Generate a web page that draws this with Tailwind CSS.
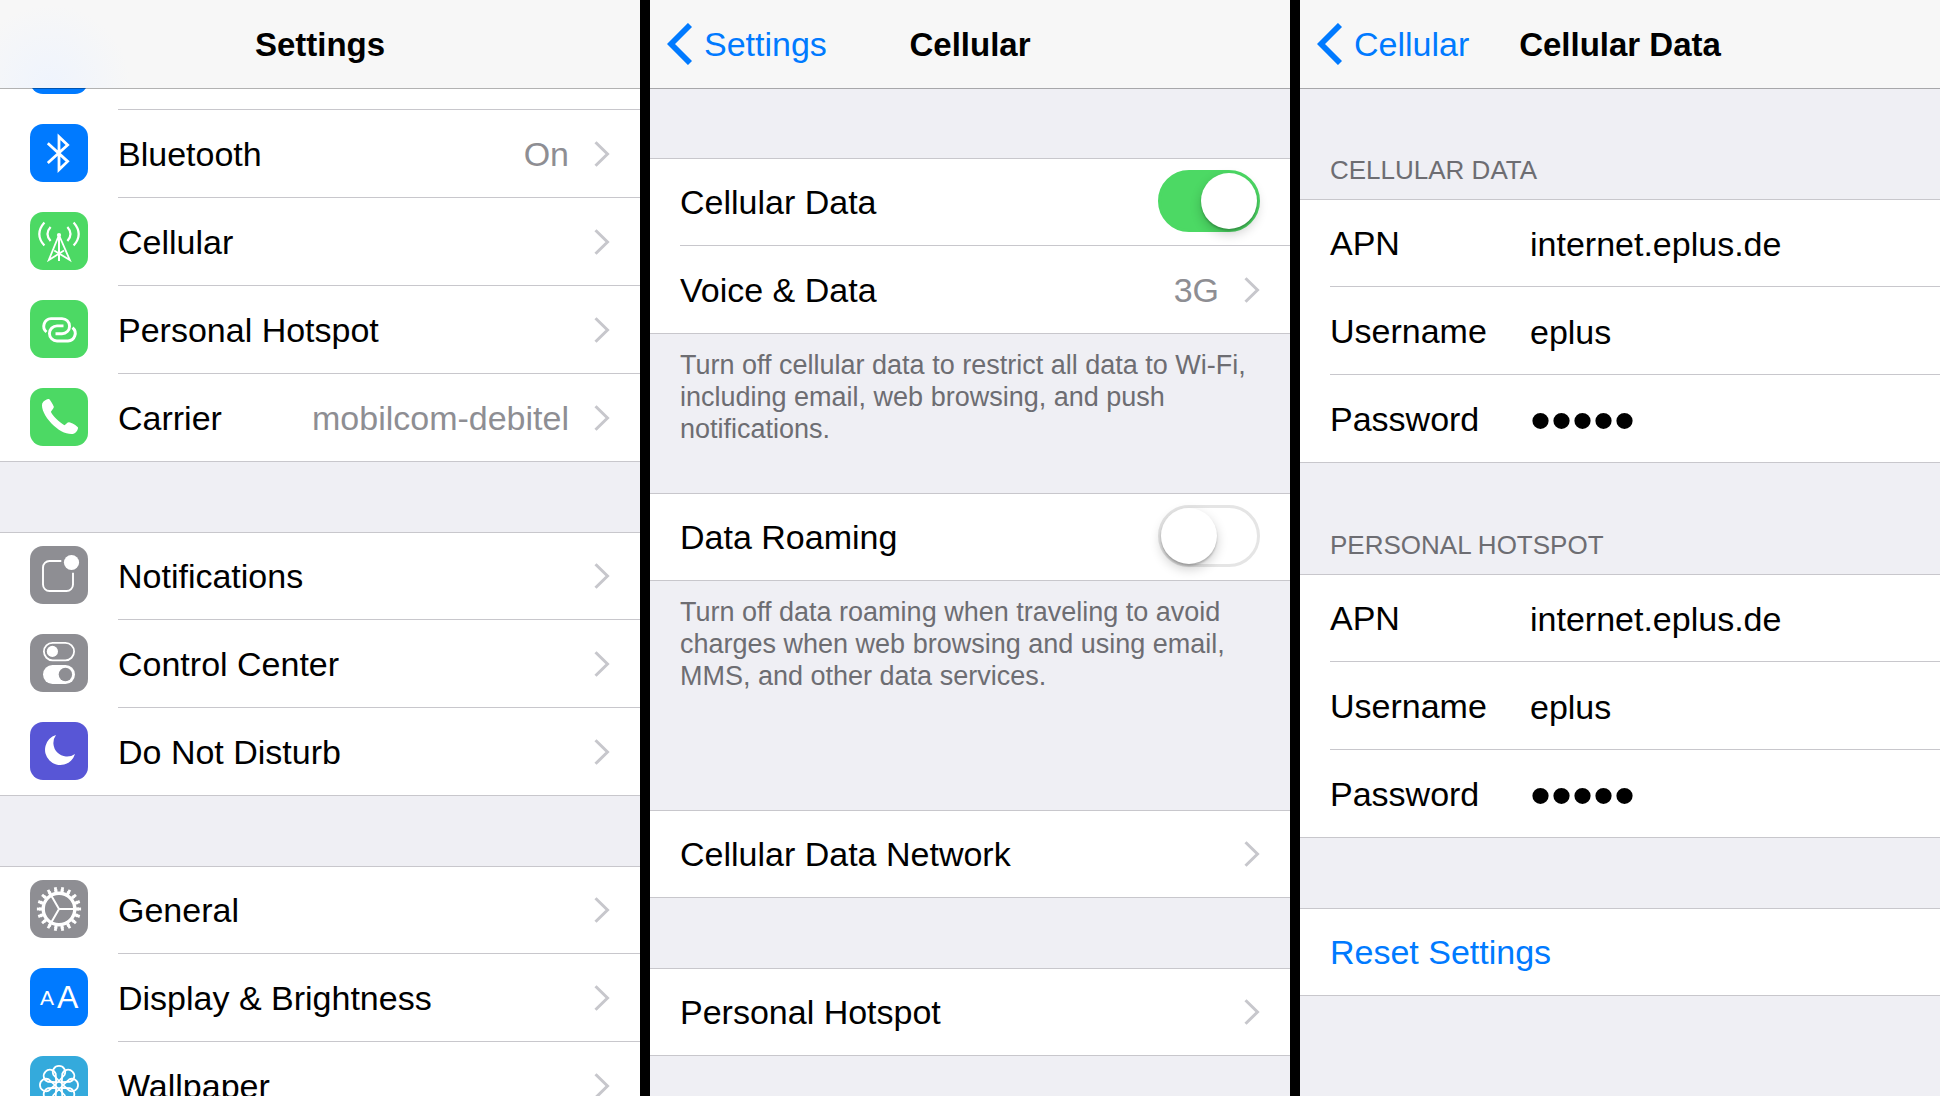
<!DOCTYPE html>
<html lang="en">

<head>
  <meta charset="UTF-8">
  <meta name="viewport" content="width=device-width, initial-scale=1.0">
  <title>Settings</title>
  <script src="https://cdn.jsdelivr.net/npm/@tailwindcss/browser@4"></script>
</head>

<body class="bg-black font-['Liberation_Sans',Arial,sans-serif] text-[34px] leading-10 text-black">

  <!-- shared arrows -->
  <svg class="hidden">
    <symbol id="chevron" viewBox="0 0 16 26">
      <path d="M1.5 1.2 13.5 13 1.5 24.8" fill="none" stroke="#c7c7cc" stroke-width="3" />
    </symbol>
    <symbol id="back" viewBox="0 0 25 42">
      <path d="M23 2 4 21 23 40" fill="none" stroke="#007aff" stroke-width="5.8" />
    </symbol>
  </svg>

  <div class="grid h-screen grid-cols-3 gap-2.5 overflow-hidden">

    <!-- Settings -->
    <section class="min-w-0 overflow-hidden bg-[#efeff4]">
      <header class="relative z-10 flex h-[89px] items-center justify-center border-b border-black/30 bg-[#f7f7f7] bg-[radial-gradient(circle_at_50px_85px,#eff4fd,#f7f7f7_80px)] bg-clip-padding">
        <h1 class="pt-0.5 text-[33px] font-bold">Settings</h1>
      </header>

      <ul class="-mt-[67px]">
        <li class="flex h-22 items-center border-[#c8c7cc] bg-white pl-[30px]">
          <span class="mr-[30px] mb-0.5 size-[58px] shrink-0 rounded-[13px] bg-[#007aff]"></span>
          <span class="h-full flex-1 border-b border-[#c8c7cc]"></span>
        </li>
        <li class="h-22 bg-white">
          <a href="#" class="flex h-full items-center pl-[30px]">
            <svg class="mr-[30px] mb-0.5 size-[58px] shrink-0 rounded-[13px] bg-[#007aff]" viewBox="0 0 58 58" fill="none" stroke="#fff" stroke-width="2.8">
              <path d="M17.8 19.3 37.6 37.4 29 45.7V12.7L37.6 21 17.8 39" />
            </svg>
            <span class="flex h-full flex-1 items-center border-b border-[#c8c7cc] pr-[30px]">
              <span class="flex-1">Bluetooth</span>
              <span class="text-[#8e8e93]">On</span>
              <svg class="ml-[25px] h-[26px] w-4"><use href="#chevron" /></svg>
            </span>
          </a>
        </li>
        <li class="h-22 bg-white">
          <a href="#" class="flex h-full items-center pl-[30px]">
            <svg class="mr-[30px] mb-0.5 size-[58px] shrink-0 rounded-[13px] bg-[#4cd964]" viewBox="0 0 58 58" fill="none" stroke="#fff" stroke-width="2.2">
              <path d="M14.4 10.4Q4.2 22 14.4 33.6M43.6 10.4Q53.8 22 43.6 33.6M20.6 15Q14.4 22 20.6 29M37.4 15Q43.6 22 37.4 29" />
              <path d="M28.6 24 18.8 48 34 38.6M29.4 24 39.8 48 24.2 38.6" stroke-width="1.8" />
              <path d="M29 24V49" stroke-width="2" />
              <circle cx="29" cy="23" r="2.1" fill="#fff" stroke="none" />
            </svg>
            <span class="flex h-full flex-1 items-center border-b border-[#c8c7cc] pr-[30px]">
              <span class="flex-1">Cellular</span>
              <svg class="ml-[25px] h-[26px] w-4"><use href="#chevron" /></svg>
            </span>
          </a>
        </li>
        <li class="h-22 bg-white">
          <a href="#" class="flex h-full items-center pl-[30px]">
            <svg class="mr-[30px] mb-0.5 size-[58px] shrink-0 rounded-[13px] bg-[#4cd964]" viewBox="0 0 58 58" fill="none" stroke="#fff" stroke-width="2.9">
              <path d="M16.5 32A7.6 7.6 0 0 1 21 18.6H32A7.55 7.55 0 0 1 32 33.7H25.5" />
              <path d="M42.5 27.6A7.6 7.6 0 0 1 38 41H27A7.55 7.55 0 0 1 27 25.9H33.5" />
            </svg>
            <span class="flex h-full flex-1 items-center border-b border-[#c8c7cc] pr-[30px]">
              <span class="flex-1">Personal Hotspot</span>
              <svg class="ml-[25px] h-[26px] w-4"><use href="#chevron" /></svg>
            </span>
          </a>
        </li>
        <li class="h-22 border-b border-[#c8c7cc] bg-white">
          <a href="#" class="flex h-full items-center pl-[30px]">
            <svg class="mr-[30px] mb-0.5 size-[58px] shrink-0 rounded-[13px] bg-[#4cd964]" viewBox="0 0 58 58" fill="#fff">
              <path d="M12.2 15.5C13.5 12.5 17.5 10.8 18.8 11C20.2 11.4 22.6 16 23.8 18.5C24.3 20 21.8 22 20.9 23.8C21.5 26.5 30 35.2 34.4 37.2C35.8 36.5 37.3 34.2 39 34.2C41.5 34.5 46.8 37.5 48 39.5C48.4 41.5 45.5 45.8 42.5 46C36 46.5 28 42.3 21.5 35.5C15 28.5 11 20.5 12.2 15.5Z" />
            </svg>
            <span class="flex h-full flex-1 items-center pr-[30px]">
              <span class="flex-1">Carrier</span>
              <span class="text-[#8e8e93]">mobilcom-debitel</span>
              <svg class="ml-[25px] h-[26px] w-4"><use href="#chevron" /></svg>
            </span>
          </a>
        </li>
      </ul>

      <ul class="mt-[70px] border-t border-[#c8c7cc]">
        <li class="h-[87px] bg-white">
          <a href="#" class="flex h-full items-center pl-[30px]">
            <svg class="mr-[30px] mb-[3px] size-[58px] shrink-0 rounded-[13px] bg-[#8e8e93]" viewBox="0 0 58 58" fill="none" stroke="#fff" stroke-width="1.9">
              <path d="M31.3 15H19.5a6.5 6.5 0 0 0-6.5 6.5V38.5a6.5 6.5 0 0 0 6.5 6.5H36.5a6.5 6.5 0 0 0 6.5-6.5V26.7" />
              <circle cx="41.5" cy="16.5" r="7.6" fill="#fff" stroke="none" />
            </svg>
            <span class="flex h-full flex-1 items-center border-b border-[#c8c7cc] pr-[30px]">
              <span class="flex-1">Notifications</span>
              <svg class="ml-[25px] h-[26px] w-4"><use href="#chevron" /></svg>
            </span>
          </a>
        </li>
        <li class="h-22 bg-white">
          <a href="#" class="flex h-full items-center pl-[30px]">
            <svg class="mr-[30px] mb-0.5 size-[58px] shrink-0 rounded-[13px] bg-[#8e8e93]" viewBox="0 0 58 58" fill="#fff">
              <rect x="13.9" y="8.9" width="30.2" height="17.4" rx="8.7" fill="none" stroke="#fff" stroke-width="1.8" />
              <circle cx="22.4" cy="17.4" r="5.6" />
              <rect x="13" y="31" width="32" height="19" rx="9.5" />
              <circle cx="35.4" cy="40.5" r="6.7" fill="#8e8e93" />
            </svg>
            <span class="flex h-full flex-1 items-center border-b border-[#c8c7cc] pr-[30px]">
              <span class="flex-1">Control Center</span>
              <svg class="ml-[25px] h-[26px] w-4"><use href="#chevron" /></svg>
            </span>
          </a>
        </li>
        <li class="h-22 border-b border-[#c8c7cc] bg-white">
          <a href="#" class="flex h-full items-center pl-[30px]">
            <svg class="mr-[30px] mb-0.5 size-[58px] shrink-0 rounded-[13px] bg-[#5856d6]" viewBox="0 0 58 58" fill="#fff">
              <path d="M26 13A15.3 15.3 0 1 0 45 32A13.6 13.6 0 0 1 26 13Z" />
            </svg>
            <span class="flex h-full flex-1 items-center pr-[30px]">
              <span class="flex-1">Do Not Disturb</span>
              <svg class="ml-[25px] h-[26px] w-4"><use href="#chevron" /></svg>
            </span>
          </a>
        </li>
      </ul>

      <ul class="mt-[70px] border-t border-[#c8c7cc]">
        <li class="h-[87px] bg-white">
          <a href="#" class="flex h-full items-center pl-[30px]">
            <svg class="mr-[30px] mb-[3px] size-[58px] shrink-0 rounded-[13px] bg-[#8e8e93]" viewBox="0 0 58 58" fill="none" stroke="#fff">
              <circle cx="29" cy="29" r="15.8" stroke-width="3.4" />
              <!-- 18 teeth, wide at the root and narrow at the tip -->
              <circle cx="29" cy="29" r="18.4" stroke-width="3" pathLength="180" stroke-dasharray="5 5" stroke-dashoffset="2.5" />
              <circle cx="29" cy="29" r="20.6" stroke-width="3" pathLength="180" stroke-dasharray="3.8 6.2" stroke-dashoffset="1.9" />
              <path d="M29 29H44M29 29 21.5 16M29 29 21.5 42" stroke-width="2" />
            </svg>
            <span class="flex h-full flex-1 items-center border-b border-[#c8c7cc] pr-[30px]">
              <span class="flex-1">General</span>
              <svg class="ml-[25px] h-[26px] w-4"><use href="#chevron" /></svg>
            </span>
          </a>
        </li>
        <li class="h-22 bg-white">
          <a href="#" class="flex h-full items-center pl-[30px]">
            <svg class="mr-[30px] mb-0.5 size-[58px] shrink-0 rounded-[13px] bg-[#007aff]" viewBox="0 0 58 58" fill="#fff">
              <text x="10" y="37" font-size="21">A</text>
              <text x="27" y="40" font-size="32">A</text>
            </svg>
            <span class="flex h-full flex-1 items-center border-b border-[#c8c7cc] pr-[30px]">
              <span class="flex-1">Display &amp; Brightness</span>
              <svg class="ml-[25px] h-[26px] w-4"><use href="#chevron" /></svg>
            </span>
          </a>
        </li>
        <li class="h-22 bg-white">
          <a href="#" class="flex h-full items-center pl-[30px]">
            <svg class="mr-[30px] mb-0.5 size-[58px] shrink-0 rounded-[13px] bg-[#34aadc]" viewBox="0 0 58 58" fill="none" stroke="#fff" stroke-width="1.8">
              <g transform="translate(29 29)">
                <path id="petal" d="M0-4-5.6-10.2A6.2 6.2 0 1 1 5.6-10.2Z" />
                <use href="#petal" transform="rotate(45)" />
                <use href="#petal" transform="rotate(90)" />
                <use href="#petal" transform="rotate(135)" />
                <use href="#petal" transform="rotate(180)" />
                <use href="#petal" transform="rotate(225)" />
                <use href="#petal" transform="rotate(270)" />
                <use href="#petal" transform="rotate(315)" />
                <circle r="3.2" />
              </g>
            </svg>
            <span class="flex h-full flex-1 items-center border-b border-[#c8c7cc] pr-[30px]">
              <span class="flex-1">Wallpaper</span>
              <svg class="ml-[25px] h-[26px] w-4"><use href="#chevron" /></svg>
            </span>
          </a>
        </li>
      </ul>
    </section>

    <!-- Cellular -->
    <section class="min-w-0 overflow-hidden bg-[#efeff4]">
      <header class="grid h-[89px] grid-cols-[1fr_auto_1fr] items-center border-b border-black/30 bg-[#f7f7f7] bg-clip-padding px-[17px]">
        <a href="#" class="flex items-center gap-3 text-[#007aff]">
          <svg class="h-[42px] w-[25px]"><use href="#back" /></svg>
          Settings
        </a>
        <h1 class="pt-0.5 text-[33px] font-bold">Cellular</h1>
      </header>

      <ul class="mt-[69px] border-t border-[#c8c7cc]">
        <li class="h-[87px] bg-white pl-[30px]">
          <label class="flex h-full items-center border-b border-[#c8c7cc] pr-[30px]">
            <span class="flex-1">Cellular Data</span>
            <input type="checkbox" role="switch" checked class="mb-0.5 h-[62px] w-[102px] appearance-none rounded-full border-3 border-[#e5e5e5] before:block before:size-14 before:rounded-full before:bg-white before:shadow-[0_5px_12px_rgba(0,0,0,0.2),0_2px_2px_rgba(0,0,0,0.2)] checked:border-[#4cd964] checked:bg-[#4cd964] checked:before:translate-x-10">
          </label>
        </li>
        <li class="h-22 border-b border-[#c8c7cc] bg-white">
          <a href="#" class="flex h-full items-center px-[30px]">
            <span class="flex-1">Voice &amp; Data</span>
            <span class="text-[#8e8e93]">3G</span>
            <svg class="ml-[25px] h-[26px] w-4"><use href="#chevron" /></svg>
          </a>
        </li>
      </ul>
      <p class="px-[30px] pt-[15px] pb-12 text-[27px] leading-8 text-[#6d6d72]">Turn off cellular data to restrict all data to Wi-Fi, including email, web browsing, and push notifications.</p>

      <ul class="border-t border-[#c8c7cc]">
        <li class="h-[87px] border-b border-[#c8c7cc] bg-white">
          <label class="flex h-full items-center px-[30px]">
            <span class="flex-1">Data Roaming</span>
            <input type="checkbox" role="switch" class="mb-0.5 h-[62px] w-[102px] appearance-none rounded-full border-3 border-[#e5e5e5] before:block before:size-14 before:rounded-full before:bg-white before:shadow-[0_5px_12px_rgba(0,0,0,0.2),0_2px_2px_rgba(0,0,0,0.2)] checked:border-[#4cd964] checked:bg-[#4cd964] checked:before:translate-x-10">
          </label>
        </li>
      </ul>
      <p class="px-[30px] pt-[15px] pb-[118px] text-[27px] leading-8 text-[#6d6d72]">Turn off data roaming when traveling to avoid charges when web browsing and using email, MMS, and other data services.</p>

      <ul class="border-t border-[#c8c7cc]">
        <li class="h-[87px] border-b border-[#c8c7cc] bg-white">
          <a href="#" class="flex h-full items-center px-[30px]">
            <span class="flex-1">Cellular Data Network</span>
            <svg class="ml-[25px] h-[26px] w-4"><use href="#chevron" /></svg>
          </a>
        </li>
      </ul>

      <ul class="mt-[70px] border-t border-[#c8c7cc]">
        <li class="h-[87px] border-b border-[#c8c7cc] bg-white">
          <a href="#" class="flex h-full items-center px-[30px]">
            <span class="flex-1">Personal Hotspot</span>
            <svg class="ml-[25px] h-[26px] w-4"><use href="#chevron" /></svg>
          </a>
        </li>
      </ul>
    </section>

    <!-- Cellular Data -->
    <section class="min-w-0 overflow-hidden bg-[#efeff4]">
      <header class="grid h-[89px] grid-cols-[1fr_auto_1fr] items-center border-b border-black/30 bg-[#f7f7f7] bg-clip-padding px-[17px]">
        <a href="#" class="flex items-center gap-3 text-[#007aff]">
          <svg class="h-[42px] w-[25px]"><use href="#back" /></svg>
          Cellular
        </a>
        <h1 class="pt-0.5 text-[33px] font-bold">Cellular Data</h1>
      </header>

      <form>
        <h2 class="px-[30px] pt-[65px] pb-[13px] text-[26px] leading-8 text-[#6d6d72] uppercase">Cellular Data</h2>
        <div class="border-y border-[#c8c7cc] bg-white pl-[30px]">
          <div class="flex h-[87px] items-center border-b border-[#c8c7cc]">
            <label for="data-apn" class="w-[200px] shrink-0">APN</label>
            <input id="data-apn" type="text" value="internet.eplus.de" class="min-w-0 flex-1 pt-0.5 outline-none">
          </div>
          <div class="flex h-22 items-center border-b border-[#c8c7cc]">
            <label for="data-user" class="w-[200px] shrink-0">Username</label>
            <input id="data-user" type="text" value="eplus" class="min-w-0 flex-1 pt-0.5 outline-none">
          </div>
          <div class="flex h-[87px] items-center">
            <label for="data-pass" class="w-[200px] shrink-0">Password</label>
            <input id="data-pass" type="password" value="eplus" class="min-w-0 flex-1 pt-1 text-[60px] leading-[70px] outline-none">
          </div>
        </div>

        <h2 class="px-[30px] pt-[66px] pb-[13px] text-[26px] leading-8 text-[#6d6d72] uppercase">Personal Hotspot</h2>
        <div class="border-y border-[#c8c7cc] bg-white pl-[30px]">
          <div class="flex h-[87px] items-center border-b border-[#c8c7cc]">
            <label for="hotspot-apn" class="w-[200px] shrink-0">APN</label>
            <input id="hotspot-apn" type="text" value="internet.eplus.de" class="min-w-0 flex-1 pt-0.5 outline-none">
          </div>
          <div class="flex h-22 items-center border-b border-[#c8c7cc]">
            <label for="hotspot-user" class="w-[200px] shrink-0">Username</label>
            <input id="hotspot-user" type="text" value="eplus" class="min-w-0 flex-1 pt-0.5 outline-none">
          </div>
          <div class="flex h-[87px] items-center">
            <label for="hotspot-pass" class="w-[200px] shrink-0">Password</label>
            <input id="hotspot-pass" type="password" value="eplus" class="min-w-0 flex-1 pt-1 text-[60px] leading-[70px] outline-none">
          </div>
        </div>

        <button type="reset" class="mt-[70px] block h-22 w-full border-y border-[#c8c7cc] bg-white px-[30px] text-left text-[#007aff]">Reset Settings</button>
      </form>
    </section>

  </div>

</body>
</html>
